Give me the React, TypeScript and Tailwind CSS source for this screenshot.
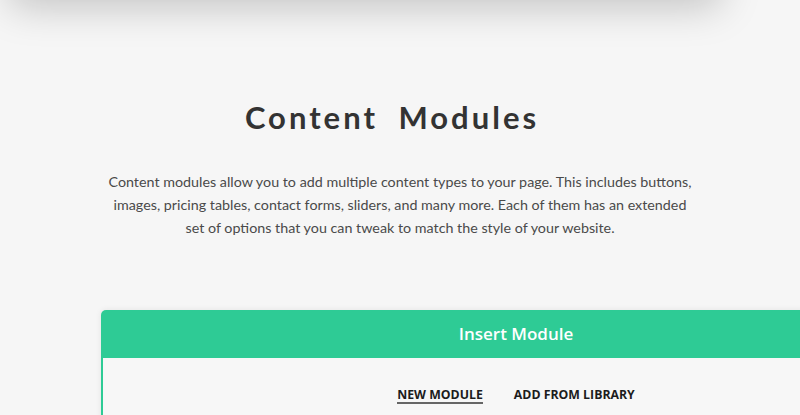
export default function App() {
  return (
    <div className="h-[415px] w-[800px] overflow-hidden bg-[#f6f6f6]">
      {/* bottom of the section above, only its shadow shows */}
      <div className="-mt-[60px] ml-[10px] h-[60px] w-[710px] bg-[#f6f6f6] shadow-[0_6px_40px_rgba(0,0,0,0.22)]" />

      <div className="flex flex-col items-center pt-[99px]">
        <h1 className="pr-[16px] font-['Lato',sans-serif] text-[31px] font-bold leading-[36px] tracking-[3px] text-[#333333] [word-spacing:10px]">
          Content Modules
        </h1>
        <p className="mt-[35px] w-[640px] text-center font-['Lato',sans-serif] text-[14.3px] font-normal leading-[23px] text-[#4a4a4a]">
          Content modules allow you to add multiple content types to your page. This includes buttons,
          <br />
          images, pricing tables, contact forms, sliders, and many more. Each of them has an extended
          <br />
          set of options that you can tweak to match the style of your website.
        </p>
      </div>

      {/* Insert module card */}
      <div className="ml-[101px] mt-[71px] w-[830px] rounded-t-[5px] shadow-[0_0_6px_rgba(0,0,0,0.08)]">
        <div className="flex h-[48px] items-center justify-center rounded-t-[5px] bg-[#2ecb95]">
          <span className="font-['Open_Sans',sans-serif] text-[17px] font-semibold text-white">Insert Module</span>
        </div>
        <div className="h-[120px] border-x-2 border-[#2ecb95] bg-[#f7f7f7]">
          <div className="flex justify-center gap-[31px] pt-[29px] font-['Open_Sans',sans-serif] text-[12.3px] font-bold text-[#1c1c1c]">
            <span className="border-b-2 border-[#666666] leading-[15px]">NEW MODULE</span>
            <span className="leading-[15px]">ADD FROM LIBRARY</span>
          </div>
        </div>
      </div>
    </div>
  );
}
